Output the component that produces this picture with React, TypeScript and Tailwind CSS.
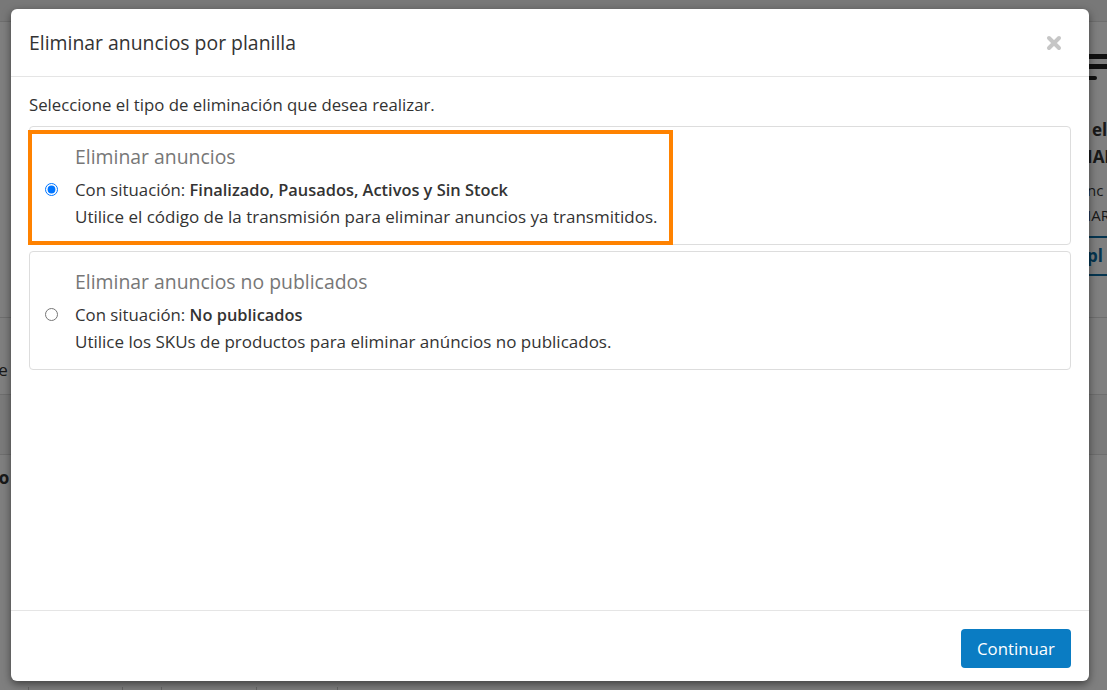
import React from "react";

// ─── Background page (dimmed behind the modal) ───────────────────────────────

const PageBehind: React.FC = () => (
  <div className="h-[690px] w-full overflow-hidden bg-white text-[15px] text-[#333]">
    <div className="h-[22px] border-b border-[#ddd] bg-[#f0f0f0]" />
    <div className="flex h-[296px] justify-end border-b border-[#ddd]">
      <div className="flex w-[20px] flex-col pt-[32px]">
        <span className="h-[5px] w-[20px] bg-[#222]" />
        <span className="mt-[5px] h-[5px] w-[20px] bg-[#222]" />
        <span className="mt-[7px] h-[4px] w-[10px] rounded-full bg-[#222]" />
        <p className="mt-[36px] whitespace-nowrap pl-[5px] text-[17px] font-bold leading-[27px]">el</p>
        <p className="whitespace-nowrap text-[17px] font-bold leading-[27px]">IAR</p>
        <p className="mt-[8px] whitespace-nowrap text-[15px] leading-[25px]">nc</p>
        <p className="whitespace-nowrap text-[15px] leading-[25px]">IAR</p>
        <p className="mt-[8px] whitespace-nowrap border-y-2 border-[#0a6aa1] py-[6px] text-[17px] font-bold leading-[24px] text-[#0a6aa1]">
          pl
        </p>
      </div>
    </div>
    <div className="ml-[-6px] flex h-[77px] items-start border-b border-[#ddd] pt-[40px] text-[17px] leading-[24px]">
      le
    </div>
    <div className="h-[60px] border-b border-[#ddd] bg-[#f5f5f5]" />
    <div className="ml-[-10px] flex h-[46px] items-center text-[17px] font-bold">co</div>
    <div className="h-[186px]" />
    <div className="ml-[28px] flex text-[17px] text-[#777]">
      <span className="border-x border-[#ccc] px-[14px]">Anterior</span>
      <span className="border-r border-[#ccc] px-[14px] text-[#333]">1</span>
      <span className="border-r border-[#ccc] px-[14px]">Próxima</span>
      <span className="border-r border-[#ccc] px-[14px]">Última</span>
    </div>
  </div>
);

// ─── Option card ──────────────────────────────────────────────────────────────

type OptionProps = {
  title: string;
  status: string;
  hint: string;
  checked?: boolean;
  highlight?: boolean;
};

const OptionCard: React.FC<OptionProps> = ({ title, status, hint, checked, highlight }) => (
  <label className="relative block h-[119px] rounded-[4px] border border-[#dddddd] pl-[45px] pt-[16px]">
    {highlight && (
      <span className="pointer-events-none absolute left-[-2px] top-[3px] h-[115px] w-[645px] border-[4px] border-[#ff8200]" />
    )}
    <p className="text-[19.4px] leading-[27px] text-[#777]">{title}</p>
    <div className="relative mt-[6px]">
      <input
        type="radio"
        name="tipo"
        defaultChecked={checked}
        className="absolute left-[-30px] top-[7px] m-0 h-[13px] w-[13px] accent-[#0075ff]"
      />
      <p className="text-[16.8px] leading-[27px] text-[#333]">
        Con situación: <span className="text-[16.4px] font-semibold">{status}</span>
      </p>
      <p className="text-[17px] leading-[27px] text-[#333]">{hint}</p>
    </div>
  </label>
);

// ─── App ──────────────────────────────────────────────────────────────────────

export default function App() {
  return (
    <div className="relative h-[690px] w-[1107px] overflow-hidden font-['Open_Sans',sans-serif]">
      <PageBehind />
      <div className="absolute inset-0 bg-black/50" />

      {/* Modal */}
      <div className="absolute left-[11px] top-[9px] flex h-[672px] w-[1078px] flex-col rounded-[6px] bg-white shadow-[0_3px_9px_rgba(0,0,0,0.5)]">
        <div className="flex h-[68px] items-center justify-between border-b border-[#e5e5e5] px-[18px]">
          <h4 className="mt-[1px] text-[19.4px] text-[#333]">Eliminar anuncios por planilla</h4>
          <button className="mr-[9px]">
            <svg width="16" height="16" viewBox="0 0 16 16">
              <path
                d="M3 3 L13 13 M13 3 L3 13"
                stroke="#c6c6c6"
                strokeWidth="4"
                strokeLinecap="round"
              />
            </svg>
          </button>
        </div>

        <div className="flex-1 px-[18px] pt-[17px]">
          <p className="mb-[10px] text-[16.8px] leading-[22px] text-[#333]">
            Seleccione el tipo de eliminación que desea realizar.
          </p>
          <div className="flex flex-col gap-[6px]">
            <OptionCard
              title="Eliminar anuncios"
              status="Finalizado, Pausados, Activos y Sin Stock"
              hint="Utilice el código de la transmisión para eliminar anuncios ya transmitidos."
              checked
              highlight
            />
            <OptionCard
              title="Eliminar anuncios no publicados"
              status="No publicados"
              hint="Utilice los SKUs de productos para eliminar anúncios no publicados."
            />
          </div>
        </div>

        <div className="flex h-[71px] justify-end border-t border-[#e5e5e5] px-[18px] pt-[18px]">
          <button className="h-[39px] w-[110px] rounded-[4px] bg-[#0a7cc3] text-[16.8px] text-white">
            Continuar
          </button>
        </div>
      </div>
    </div>
  );
}
